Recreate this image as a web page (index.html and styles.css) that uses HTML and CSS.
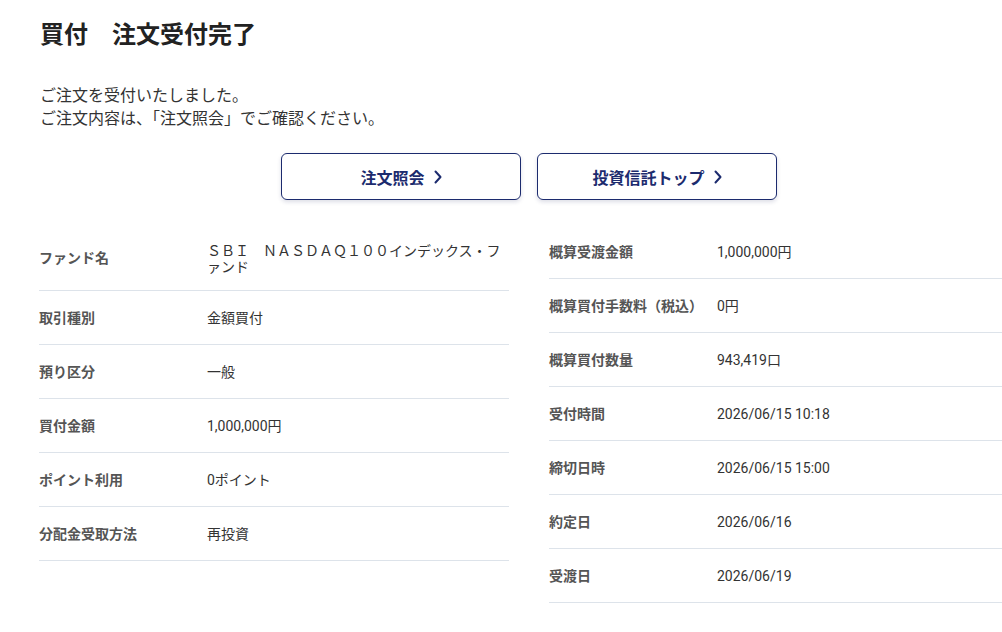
FILE: index.html
```html
<!DOCTYPE html>
<html lang="ja">
<head>
<meta charset="utf-8">
<title>買付 注文受付完了</title>
<link rel="stylesheet" href="styles.css">
</head>
<body>
<main class="page">
  <h1 class="title">買付　注文受付完了</h1>
  <p class="message">ご注文を受付いたしました。<br>ご注文内容は、「注文照会」でご確認ください。</p>

  <div class="actions">
    <a class="btn" href="#">注文照会<svg class="chev" viewBox="0 0 8 14" width="8" height="14"><path d="M1.5 1.5 L6.5 7 L1.5 12.5" fill="none" stroke="currentColor" stroke-width="2" stroke-linecap="round" stroke-linejoin="round"/></svg></a>
    <a class="btn" href="#">投資信託トップ<svg class="chev" viewBox="0 0 8 14" width="8" height="14"><path d="M1.5 1.5 L6.5 7 L1.5 12.5" fill="none" stroke="currentColor" stroke-width="2" stroke-linecap="round" stroke-linejoin="round"/></svg></a>
  </div>

  <div class="details">
    <dl class="table">
      <div class="row">
        <dt>ファンド名</dt>
        <dd class="fund">ＳＢＩ　ＮＡＳＤＡＱ１００インデックス・ファンド</dd>
      </div>
      <div class="row"><dt>取引種別</dt><dd>金額買付</dd></div>
      <div class="row"><dt>預り区分</dt><dd>一般</dd></div>
      <div class="row"><dt>買付金額</dt><dd>1,000,000円</dd></div>
      <div class="row"><dt>ポイント利用</dt><dd>0ポイント</dd></div>
      <div class="row"><dt>分配金受取方法</dt><dd>再投資</dd></div>
    </dl>
    <dl class="table">
      <div class="row"><dt>概算受渡金額</dt><dd>1,000,000円</dd></div>
      <div class="row"><dt>概算買付手数料（税込）</dt><dd>0円</dd></div>
      <div class="row"><dt>概算買付数量</dt><dd>943,419口</dd></div>
      <div class="row"><dt>受付時間</dt><dd>2026/06/15 10:18</dd></div>
      <div class="row"><dt>締切日時</dt><dd>2026/06/15 15:00</dd></div>
      <div class="row"><dt>約定日</dt><dd>2026/06/16</dd></div>
      <div class="row"><dt>受渡日</dt><dd>2026/06/19</dd></div>
    </dl>
  </div>
</main>
</body>
</html>
```

FILE: styles.css
```css
html, body {
  margin: 0;
  padding: 0;
  overflow: hidden;
  background: #fff;
}

body {
  font-family: Roboto, "Noto Sans CJK JP", sans-serif;
  color: #333;
}

.page {
  width: 980px;
  margin-left: 39px;
  padding-top: 20px;
}

.title {
  margin: 0;
  font-size: 24px;
  line-height: 30px;
  font-weight: 700;
  color: #222;
  padding-left: 1px;
}

.message {
  margin: 34px 0 0;
  font-size: 16px;
  line-height: 23px;
  color: #333;
  padding-left: 1px;
}

.actions {
  display: flex;
  justify-content: center;
  gap: 16px;
  margin-top: 23px;
}

.btn {
  box-sizing: border-box;
  width: 240px;
  height: 47px;
  display: flex;
  align-items: center;
  justify-content: center;
  gap: 9px;
  border: 1px solid #1c2b6e;
  border-radius: 6px;
  box-shadow: 0 2px 4px rgba(20, 30, 90, 0.15);
  color: #1c2b6e;
  font-size: 16px;
  font-weight: 700;
  text-decoration: none;
  background: #fff;
}

.chev {
  display: block;
  margin-top: 1px;
}

.details {
  display: grid;
  grid-template-columns: 470px 470px;
  column-gap: 40px;
  align-items: start;
  margin-top: 25px;
}

.table {
  margin: 0;
}

.row {
  display: flex;
  align-items: center;
  border-bottom: 1px solid #dde3ea;
  padding: 17px 0 16px;
  min-height: 20px;
}

.row dt {
  flex: 0 0 168px;
  font-size: 14px;
  line-height: 20px;
  font-weight: 700;
  color: #555;
}

.row dd {
  margin: 0;
  flex: 1;
  font-size: 14px;
  line-height: 20px;
  color: #333;
}

.row dd.fund {
  font-family: "Noto Sans CJK JP", sans-serif;
  line-height: 16px;
}
```
